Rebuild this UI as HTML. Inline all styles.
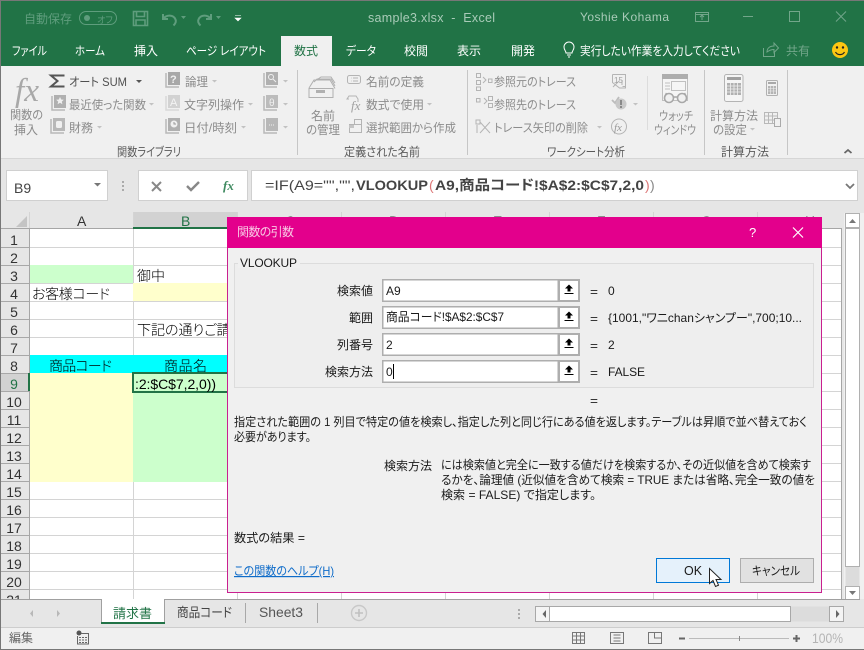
<!DOCTYPE html>
<html lang="ja"><head><meta charset="utf-8"><title>sample3.xlsx - Excel</title>
<style>
html,body{margin:0;padding:0;background:#f0f0f0;overflow:hidden}
svg{display:block;position:absolute;left:0;top:0}
text{font-family:"Liberation Sans","Noto Sans CJK JP",sans-serif;font-size:12px;font-feature-settings:"palt";white-space:pre}
.rb{fill:#8c8c8c}.gp{fill:#5a5a5a}.tb{fill:#fff;font-size:12px}.dl{fill:#1a1a1a}
.sh{fill:#000;font-size:14px;font-weight:300}.rn{fill:#333;font-size:14px;text-anchor:middle}
.ic{fill:none;stroke:#b4b4b4;stroke-width:1}.bk{fill:#b0b0b0}
</style></head><body>
<svg width="864" height="650" viewBox="0 0 864 650" xmlns="http://www.w3.org/2000/svg">
<rect width="864" height="650" fill="#f0f0f0"/>
<!-- title bar -->
<rect x="0" y="0" width="864" height="66" fill="#217346"/>
<rect x="281" y="36" width="51" height="30" fill="#f0f0f0"/>
<g fill="#5f9d7d">
<text x="24" y="23" textLength="48" lengthAdjust="spacingAndGlyphs" fill="#5f9d7d">自動保存</text>
<text x="97" y="23" style="font-size:9px" fill="#5f9d7d">オフ</text>
</g>
<rect x="79.500" y="11.500" width="37" height="13" rx="6.500" fill="none" stroke="#5f9d7d"/>
<circle cx="87" cy="18" r="3" fill="#5f9d7d"/>
<path d="M133.500 11.500h14v14h-14z M136.500 11.500v5h8v-5 M136 25v-5h9v5" fill="none" stroke="#5f9d7d" stroke-width="1.600"/>
<path d="M163 14v5h5 M163.500 18.500c3-4 10-4 12 1 1 2 0 4-2 6" fill="none" stroke="#5f9d7d" stroke-width="2"/>
<path d="M181 16h5l-2.500 3z M216 16h5l-2.500 3z" fill="#5f9d7d"/>
<path d="M211 14v5h-5 M210.500 18.500c-3-4-10-4-12 1-1 2 0 4 2 6" fill="none" stroke="#5f9d7d" stroke-width="2"/>
<path d="M235 15.500h6M235 18h6l-3 3z" fill="#fff" stroke="#fff" stroke-width=".6"/>
<text x="368" y="22" textLength="127" lengthAdjust="spacing" style="font-size:12.500px" fill="#a9cbb8">sample3.xlsx  -  Excel</text>
<text x="580" y="21" textLength="89" lengthAdjust="spacing" fill="#a9cbb8">Yoshie Kohama</text>
<path d="M695.500 12.500h13v9h-13z M702 20v-5M700 17l2-2 2 2M695 14.500h14" fill="none" stroke="#72a68a"/>
<path d="M743 16.500h10" stroke="#72a68a"/>
<rect x="789.500" y="11.500" width="10" height="10" fill="none" stroke="#72a68a"/>
<path d="M836 11.500l10 10m0-10l-10 10" stroke="#72a68a" fill="none"/>
<!-- tabs -->
<text class="tb" x="12" y="55" textLength="35" lengthAdjust="spacingAndGlyphs">ファイル</text>
<text class="tb" x="75" y="55" textLength="30" lengthAdjust="spacingAndGlyphs">ホーム</text>
<text class="tb" x="134" y="55" textLength="24" lengthAdjust="spacingAndGlyphs">挿入</text>
<text class="tb" x="186" y="55" textLength="80" lengthAdjust="spacingAndGlyphs">ページ レイアウト</text>
<text x="294" y="55" textLength="24" lengthAdjust="spacingAndGlyphs" fill="#217346">数式</text>
<text class="tb" x="346" y="55" textLength="30" lengthAdjust="spacingAndGlyphs">データ</text>
<text class="tb" x="404" y="55" textLength="24" lengthAdjust="spacingAndGlyphs">校閲</text>
<text class="tb" x="457" y="55" textLength="24" lengthAdjust="spacingAndGlyphs">表示</text>
<text class="tb" x="511" y="55" textLength="24" lengthAdjust="spacingAndGlyphs">開発</text>
<path d="M566 53c0-2-2-3-2-6a5 5 0 0 1 10 0c0 3-2 4-2 6z M567 55h4M568 57h2" fill="none" stroke="#fff"/>
<text class="tb" x="580" y="55" textLength="160" lengthAdjust="spacingAndGlyphs">実行したい作業を入力してください</text>
<path d="M763.500 48v8.500h11v-4 M767 52c0-4 3-6 7-6v-3l4.500 5-4.500 4.500v-3c-3 0-5 1-7 2.500z" fill="none" stroke="#72a68a"/>
<text x="786" y="55" textLength="24" lengthAdjust="spacingAndGlyphs" fill="#72a68a">共有</text>
<circle cx="840" cy="50" r="8" fill="#fdc712"/>
<circle cx="837" cy="47.500" r="1.200" fill="#222"/><circle cx="843" cy="47.500" r="1.200" fill="#222"/>
<path d="M835.500 52c2 3.500 7 3.500 9 0" fill="none" stroke="#222" stroke-width="1.200"/>

<!-- ribbon -->
<rect x="0" y="66" width="864" height="93" fill="#f0f0f0"/>
<rect x="0" y="158" width="864" height="1" fill="#d6d6d6"/>
<path d="M297.500 70v85M467.500 70v85M704.500 70v85M787.500 70v85" stroke="#c6c6c6"/>
<path d="M647.500 76v54" stroke="#dcdcdc"/>
<text x="15" y="101" style="font-family:'Liberation Serif',serif;font-style:italic;font-size:33px" textLength="24" lengthAdjust="spacingAndGlyphs" fill="#a8a8a8">fx</text>
<text class="rb" x="10" y="119" textLength="33" lengthAdjust="spacingAndGlyphs">関数の</text>
<text class="rb" x="14" y="134" textLength="24" lengthAdjust="spacingAndGlyphs">挿入</text>
<path d="M64.500 75.500H51l6.500 5.500-6.500 5.500h13.500" fill="none" stroke="#555" stroke-width="2"/>
<text x="69" y="86" textLength="58" lengthAdjust="spacingAndGlyphs" fill="#505050">オート SUM</text>
<path d="M136 80h6l-3 3z" fill="#555"/>
<text class="rb" x="69" y="109" textLength="77" lengthAdjust="spacingAndGlyphs">最近使った関数</text>
<text class="rb" x="69" y="132" textLength="24" lengthAdjust="spacingAndGlyphs">財務</text>
<text class="rb" x="185" y="86" textLength="23" lengthAdjust="spacingAndGlyphs">論理</text>
<text class="rb" x="184" y="109" textLength="60" lengthAdjust="spacingAndGlyphs">文字列操作</text>
<text class="rb" x="184" y="132" textLength="53" lengthAdjust="spacingAndGlyphs">日付/時刻</text>
<!-- book icons -->
<g>
<path d="M52 96v14h13" fill="none" stroke="#b8b8b8" stroke-width="1.500"/><rect x="54" y="95" width="12" height="13" fill="#b0b0b0"/><path d="M60 97l1.200 2.500 2.600.3-2 1.800.6 2.600-2.400-1.400-2.400 1.400.6-2.600-2-1.800 2.600-.3z" fill="#f0f0f0"/>
<path d="M51 119v14h13" fill="none" stroke="#b8b8b8" stroke-width="1.500"/><rect x="53" y="118" width="12" height="13" fill="#b8b8b8"/><rect x="56" y="121" width="6" height="7" rx="1.500" fill="#f0f0f0"/>
<path d="M166 73v14h13" fill="none" stroke="#b8b8b8" stroke-width="1.500"/><rect x="168" y="72" width="12" height="13" fill="#a8a8a8"/><text x="170" y="83" style="font-size:11px;font-weight:700" fill="#f0f0f0">?</text>
<path d="M166 96v14h13" fill="none" stroke="#d8d8d8" stroke-width="1.500"/><rect x="168" y="95" width="12" height="13" fill="#d2d2d2"/><text x="170" y="106" style="font-size:11px" fill="#f4f4f4">A</text>
<path d="M166 119v14h13" fill="none" stroke="#b8b8b8" stroke-width="1.500"/><rect x="168" y="118" width="12" height="13" fill="#b0b0b0"/><circle cx="174" cy="124" r="3.500" fill="#f0f0f0"/><path d="M174 122v2h2" stroke="#999" fill="none"/>
<path d="M264 73v14h13" fill="none" stroke="#b8b8b8" stroke-width="1.500"/><rect x="266" y="72" width="12" height="13" fill="#b0b0b0"/><circle cx="271" cy="77" r="2.500" fill="none" stroke="#f0f0f0"/><path d="M273 79l3 3" stroke="#f0f0f0"/>
<path d="M264 96v14h13" fill="none" stroke="#b8b8b8" stroke-width="1.500"/><rect x="266" y="95" width="12" height="13" fill="#bcbcbc"/><text x="269" y="106" style="font-size:10px" fill="#f0f0f0">θ</text>
<path d="M264 119v14h13" fill="none" stroke="#b8b8b8" stroke-width="1.500"/><rect x="266" y="118" width="12" height="13" fill="#b8b8b8"/><path d="M269 125h6" stroke="#f0f0f0" stroke-dasharray="1 1"/>
</g>
<path d="M149 103h5l-2.500 2.500zM97 126h5l-2.500 2.500zM212 80h5l-2.500 2.500zM248 103h5l-2.500 2.500zM241 126h5l-2.500 2.500zM283 80h5l-2.500 2.500zM283 103h5l-2.500 2.500zM283 126h5l-2.500 2.500zM401 80h5l-2.500 2.500zM427 103h5l-2.500 2.500zM597 126h5l-2.500 2.500zM633 103h5l-2.500 2.500z" fill="#c2c2c2"/>
<text class="gp" x="117" y="156" textLength="64" lengthAdjust="spacingAndGlyphs">関数ライブラリ</text>
<!-- names -->
<path d="M309 97.500h24v-9h-24z M309 88l5-8h16l5 8.500 M314 82l3-3h14l4 7 M318 79l3-2h10l4 6" fill="none" stroke="#b0b0b0"/>
<rect x="316" y="90" width="9" height="3" fill="#b0b0b0"/>
<text class="rb" x="311" y="120" textLength="24" lengthAdjust="spacingAndGlyphs">名前</text>
<text class="rb" x="306" y="134" textLength="34" lengthAdjust="spacingAndGlyphs">の管理</text>
<rect x="347.500" y="75.500" width="13" height="8" rx="2" class="ic"/><path d="M351 78h.5M351 81h.5M353 78h5M353 81h5" class="ic"/>
<text class="rb" x="366" y="86" textLength="58" lengthAdjust="spacingAndGlyphs">名前の定義</text>
<path d="M349 99h-2l2-3h7l2 3v3" class="ic"/><text x="351" y="110" style="font-family:'Liberation Serif',serif;font-style:italic;font-size:13px" fill="#a0a0a0">fx</text>
<text class="rb" x="366" y="109" textLength="58" lengthAdjust="spacingAndGlyphs">数式で使用</text>
<rect x="349.500" y="124.500" width="12" height="8" class="ic"/><rect x="354.500" y="119.500" width="7" height="5" class="ic"/><rect x="349" y="125" width="5" height="3" fill="#c4c4c4"/>
<text class="rb" x="366" y="132" textLength="90" lengthAdjust="spacingAndGlyphs">選択範囲から作成</text>
<text class="gp" x="344" y="156" textLength="76" lengthAdjust="spacingAndGlyphs">定義された名前</text>
<!-- audit -->
<path d="M476.500 73.500h4v4h-4zM476.500 80.500h4v4h-4zM476.500 87h4v3.500h-4zM488.500 79h3.500v3.500h-3.500zM483 77l3 3-3 3" class="ic"/>
<path d="M476.500 98.500h3.500v3.500h-3.500zM488.500 96.500h4v4h-4zM488.500 103.500h4v4h-4zM484 98l3 3-3 3" class="ic"/>
<path d="M476 120h4v4h-4zM477 125v8M480 122l10 11M490 122l-10 11" class="ic" stroke-width="1.500"/>
<text class="rb" x="494" y="86" textLength="82" lengthAdjust="spacingAndGlyphs">参照元のトレース</text>
<text class="rb" x="494" y="109" textLength="82" lengthAdjust="spacingAndGlyphs">参照先のトレース</text>
<text class="rb" x="494" y="132" textLength="94" lengthAdjust="spacingAndGlyphs">トレース矢印の削除</text>
<text class="gp" x="547" y="156" textLength="78" lengthAdjust="spacingAndGlyphs">ワークシート分析</text>
<path d="M612.500 74.500h13v12h-3 M612.500 74.500v8l7 5.500h6v-2 M613 87l6-6 M622 80v5" class="ic"/>
<text x="614" y="83" style="font-size:8px" fill="#a0a0a0">15</text>
<path d="M612 100l3 3 4-6" fill="none" stroke="#bcbcbc" stroke-width="1.800"/><circle cx="621" cy="104" r="5.500" fill="#c8c8c8"/><rect x="620" y="100" width="2" height="5" fill="#888"/><rect x="620" y="106" width="2" height="2" fill="#888"/>
<circle cx="619" cy="126.500" r="7.500" class="ic"/><text x="614" y="131" style="font-family:'Liberation Serif',serif;font-style:italic;font-size:11px" fill="#999">fx</text>
<!-- watch -->
<rect x="662.500" y="74.500" width="25" height="26" fill="#f5f5f5" stroke="#c0c0c0"/><rect x="662" y="74" width="26" height="5" fill="#adadad"/>
<rect x="671.500" y="81.500" width="14" height="9" fill="none" stroke="#c0c0c0"/><path d="M665 83h5M665 86h5M665 89h5" stroke="#c0c0c0"/>
<circle cx="669" cy="98" r="4.500" fill="#f0f0f0" stroke="#a8a8a8" stroke-width="1.600"/><circle cx="682" cy="98" r="4.500" fill="#f0f0f0" stroke="#a8a8a8" stroke-width="1.600"/><path d="M673.500 97h4M664.500 97l2-4M686.500 97l-2-4" stroke="#a8a8a8" fill="none" stroke-width="1.400"/>
<text class="rb" x="659" y="120" textLength="34" lengthAdjust="spacingAndGlyphs">ウォッチ</text>
<text class="rb" x="654" y="134" textLength="42" lengthAdjust="spacingAndGlyphs">ウィンドウ</text>
<!-- calc -->
<rect x="724.500" y="74.500" width="18.500" height="27" rx="2" fill="#f5f5f5" stroke="#b4b4b4"/><rect x="727" y="77" width="14" height="3" fill="#a0a0a0"/>
<path d="M727 83h14v12h-14z" fill="#b0b0b0"/><path d="M730.500 83v12M734 83v12M737.500 83v12M727 86h14M727 89h14M727 92h14" stroke="#f0f0f0" stroke-width=".8"/>
<rect x="766.500" y="80.500" width="11" height="15" rx="1" fill="none" stroke="#b0b0b0"/><rect x="768" y="82" width="8" height="2" fill="#a8a8a8"/><path d="M768 86h8v8h-8z" fill="#b4b4b4"/><path d="M770.500 86v8M773.500 86v8M768 88.500h8M768 91h8" stroke="#f0f0f0" stroke-width=".6"/>
<rect x="764.500" y="112.500" width="13" height="11" fill="none" stroke="#b8b8b8"/><path d="M768.500 112v12M772.500 112v12M764 116h14M764 120h14" stroke="#b8b8b8"/><rect x="774.500" y="118.500" width="6" height="8" fill="#f0f0f0" stroke="#aaa"/>
<text class="rb" x="710" y="120" textLength="48" lengthAdjust="spacingAndGlyphs">計算方法</text>
<text class="rb" x="713" y="134" textLength="34" lengthAdjust="spacingAndGlyphs">の設定</text>
<path d="M750 128h5l-2.500 2.500z" fill="#c2c2c2"/>
<text class="gp" x="721" y="156" textLength="48" lengthAdjust="spacingAndGlyphs">計算方法</text>
<path d="M844.500 153l3.500-3 3.500 3" fill="none" stroke="#666" stroke-width="1.800"/>

<!-- formula bar -->
<rect x="0" y="159" width="864" height="54" fill="#e6e6e6"/>
<rect x="6.500" y="170.500" width="101" height="30" fill="#fff" stroke="#d0d0d0"/>
<text x="14" y="193" style="font-size:14px" fill="#444">B9</text>
<path d="M94 183h7l-3.500 3.500z" fill="#777"/>
<path d="M123 181v2M123 185v2M123 189v2" stroke="#aaa" stroke-width="2"/>
<rect x="138.500" y="170.500" width="109" height="30" fill="#fff" stroke="#d0d0d0"/>
<rect x="251.500" y="170.500" width="606" height="30" fill="#fff" stroke="#d0d0d0"/>
<path d="M152 182l9 9m0-9l-9 9" stroke="#888" stroke-width="2" fill="none"/>
<path d="M187 186l4 4 8-8" stroke="#888" stroke-width="2.400" fill="none"/>
<text x="223" y="190" style="font-family:'Liberation Serif',serif;font-style:italic;font-weight:700;font-size:13px" fill="#3f8a60">fx</text>
<text x="265" y="190" textLength="90" lengthAdjust="spacingAndGlyphs" style="font-size:14px" fill="#444">=IF(A9="","",</text>
<text x="356" y="190" textLength="72" lengthAdjust="spacingAndGlyphs" style="font-size:14px;font-weight:700" fill="#444">VLOOKUP</text>
<text x="429" y="190" style="font-size:14px" fill="#d77">(</text>
<text x="435" y="190" textLength="209" lengthAdjust="spacingAndGlyphs" style="font-size:14px;font-weight:700" fill="#444">A9,商品コード!$A$2:$C$7,2,0</text>
<text x="645" y="190" style="font-size:14px" fill="#d77">)</text><text x="650" y="190" style="font-size:14px" fill="#888">)</text>
<path d="M846 184l4 4 4-4" fill="none" stroke="#777" stroke-width="1.800"/>

<!-- grid -->
<rect x="1" y="213" width="843" height="386" fill="#e6e6e6"/>
<rect x="30" y="229" width="811" height="370" fill="#fff"/>
<rect x="133" y="212" width="104" height="16" fill="#d2d2d2"/>
<rect x="0" y="373" width="29" height="18" fill="#d2d2d2"/>
<path d="M16 227h11v-11z" fill="#c4c4c4"/>
<g stroke="#d4d4d4" fill="none">
<path d="M1 247.500H841M1 265.500H841M1 283.500H841M1 301.500H841M1 319.500H841M1 337.500H841M1 355.500H841M1 373.500H841M1 391.500H841M1 409.500H841M1 427.500H841M1 445.500H841M1 463.500H841M1 481.500H841M1 499.500H841M1 517.500H841M1 535.500H841M1 553.500H841M1 571.500H841M1 589.500H841"/>
<path d="M29.500 212V599M133.500 212V599M237.500 212V599M341.500 212V599M445.500 212V599M549.500 212V599M653.500 212V599M757.500 212V599"/>
</g>
<path d="M1 247.500H29M1 265.500H29M1 283.500H29M1 301.500H29M1 319.500H29M1 337.500H29M1 355.500H29M1 373.500H29M1 391.500H29M1 409.500H29M1 427.500H29M1 445.500H29M1 463.500H29M1 481.500H29M1 499.500H29M1 517.500H29M1 535.500H29M1 553.500H29M1 571.500H29M1 589.500H29" stroke="#a8a8a8"/>
<path d="M0 228.500H841M841.500 228V599M29.500 228V599" stroke="#a6a6a6"/>
<rect x="30" y="265" width="103" height="18" fill="#ccffcc"/>
<rect x="133" y="283" width="104" height="18" fill="#ffffcc"/>
<rect x="30" y="355" width="207" height="18" fill="#00ffff"/>
<rect x="30" y="373" width="103" height="109" fill="#ffffcc"/>
<rect x="133" y="373" width="104" height="109" fill="#ccffcc"/>
<rect x="133" y="227" width="104" height="2" fill="#217346"/>
<rect x="28" y="373" width="2" height="18" fill="#217346"/>
<rect x="133" y="373" width="104" height="19" fill="none" stroke="#217346" stroke-width="2"/>
<text x="77" y="226" style="font-size:14px" fill="#333">A</text>
<text x="181" y="226" style="font-size:14px" fill="#217346">B</text>
<text x="285" y="226" style="font-size:14px" fill="#333">C</text><text x="389" y="226" style="font-size:14px" fill="#333">D</text><text x="493" y="226" style="font-size:14px" fill="#333">E</text><text x="597" y="226" style="font-size:14px" fill="#333">F</text><text x="701" y="226" style="font-size:14px" fill="#333">G</text><text x="805" y="226" style="font-size:14px" fill="#333">H</text>
<g class="num">
<text class="rn" x="14" y="245">1</text><text class="rn" x="14" y="263">2</text><text class="rn" x="14" y="281">3</text><text class="rn" x="14" y="299">4</text><text class="rn" x="14" y="317">5</text><text class="rn" x="14" y="335">6</text><text class="rn" x="14" y="353">7</text><text class="rn" x="14" y="371">8</text><text class="rn" x="14" y="389" style="fill:#217346">9</text><text class="rn" x="14" y="407">10</text><text class="rn" x="14" y="425">11</text><text class="rn" x="14" y="443">12</text><text class="rn" x="14" y="461">13</text><text class="rn" x="14" y="479">14</text><text class="rn" x="14" y="497">15</text><text class="rn" x="14" y="515">16</text><text class="rn" x="14" y="533">17</text><text class="rn" x="14" y="551">18</text><text class="rn" x="14" y="569">19</text><text class="rn" x="14" y="587">20</text><text class="rn" x="14" y="605">21</text>
</g>
<text class="sh" x="137" y="281" textLength="28" lengthAdjust="spacing">御中</text>
<text class="sh" x="32" y="299" textLength="78" lengthAdjust="spacing">お客様コード</text>
<text class="sh" x="137" y="335">下記の通りご請</text>
<text class="sh" x="49" y="371" textLength="63" lengthAdjust="spacing">商品コード</text>
<text class="sh" x="164" y="371" textLength="43" lengthAdjust="spacing">商品名</text>
<text x="135" y="389" textLength="81" lengthAdjust="spacing" style="font-size:14px" fill="#000">:2:$C$7,2,0))</text>

<!-- scrollbar v -->
<rect x="845.500" y="213.500" width="14" height="14" fill="#fff" stroke="#b0b0b0"/><path d="M849 223l3.500-4 3.500 4z" fill="#777"/>
<rect x="845.500" y="228" width="14" height="371" fill="#dcdcdc"/>
<rect x="845.500" y="228.500" width="14" height="338" fill="#fff" stroke="#b0b0b0"/>
<rect x="845.500" y="586.500" width="14" height="13" fill="#fff" stroke="#b0b0b0"/><path d="M849 591l3.500 4 3.500-4z" fill="#777"/>

<!-- sheet tabs -->
<rect x="1" y="599" width="863" height="28" fill="#e6e6e6"/>
<path d="M0 599.500H860" stroke="#a0a0a0"/>
<path d="M0 627.500H864" stroke="#cdcdcd"/>
<rect x="101" y="599" width="64" height="23" fill="#fff"/>
<path d="M101.500 599v25M164.500 599v23" stroke="#a0a0a0"/>
<rect x="101" y="622" width="64" height="2" fill="#217346"/>
<path d="M33 610v7l-3-3.500zM57 610v7l3-3.500z" fill="#b8b8b8"/>
<text x="113" y="618" textLength="39" lengthAdjust="spacingAndGlyphs" style="font-size:13px" fill="#217346">請求書</text>
<text x="177" y="617" textLength="55" lengthAdjust="spacingAndGlyphs" style="font-size:13px" fill="#444">商品コード</text>
<path d="M245.500 603v20M317.500 603v20" stroke="#a8a8a8"/>
<text x="259" y="617" textLength="44" lengthAdjust="spacingAndGlyphs" style="font-size:14px" fill="#555">Sheet3</text>
<circle cx="359" cy="613" r="7.500" fill="none" stroke="#c8c8c8" stroke-width="1.400"/><path d="M355 613h8M359 609v8" stroke="#c0c0c0" stroke-width="1.600"/>
<path d="M519 609v2M519 613v2M519 617v2" stroke="#aaa" stroke-width="2"/>
<rect x="535.500" y="606.500" width="14" height="15" fill="#f4f4f4" stroke="#a8a8a8"/><path d="M546 610v8l-3.500-4z" fill="#666"/>
<rect x="549" y="606.500" width="280" height="15" fill="#dcdcdc"/>
<rect x="549.500" y="606.500" width="241" height="15" fill="#fff" stroke="#a8a8a8"/>
<rect x="829.500" y="606.500" width="14" height="15" fill="#f4f4f4" stroke="#a8a8a8"/><path d="M836 610v8l3.500-4z" fill="#666"/>

<!-- status -->
<text x="9" y="642" textLength="24" lengthAdjust="spacingAndGlyphs" fill="#666">編集</text>
<circle cx="79" cy="633" r="2.500" fill="#555"/><path d="M81 633.500h7.500v10.500h-11v-8" fill="none" stroke="#666"/><path d="M79 637.500h8M79 640h8M79 642.500h8" stroke="#666" stroke-dasharray="2 1"/>
<path d="M572.500 632.500h12v11h-12zM576.500 632v12M580.500 632v12M572 636h13M572 640h13" fill="none" stroke="#777"/>
<path d="M610.500 632.500h13v11h-13zM613.500 635h7M613.500 638h7M613.500 641h7" fill="none" stroke="#777"/>
<path d="M648.500 632.500h13v11h-13zM654.500 632v6h7" fill="none" stroke="#777"/>
<path d="M679 638.500h6" stroke="#666" stroke-width="2"/><path d="M689 638.500h100" stroke="#bbb"/><path d="M739.500 636v5" stroke="#888"/>
<path d="M793 638.500h7M796.500 635v7" stroke="#666" stroke-width="2"/>
<text x="812" y="643" textLength="31" lengthAdjust="spacingAndGlyphs" style="font-size:14px" fill="#b4b4b4">100%</text>

<!-- dialog -->
<rect x="227.500" y="217.500" width="594" height="375" fill="#f0f0f0" stroke="#c9208f"/>
<rect x="227" y="217" width="595" height="31" fill="#e3008c"/>
<text x="237" y="236" textLength="57" lengthAdjust="spacing" fill="#f8c8e4">関数の引数</text>
<text x="749" y="237" style="font-size:13px" fill="#fff">?</text>
<path d="M793 227.500l10 10m0-10l-10 10" stroke="#fff" stroke-width="1.200" fill="none"/>
<rect x="234.500" y="263.500" width="579" height="124" fill="#eeeeee" stroke="#dcdcdc"/>
<rect x="238" y="258" width="62" height="10" fill="#f0f0f0"/>
<text class="dl" x="240" y="267" textLength="57" lengthAdjust="spacing">VLOOKUP</text>
<text class="dl" x="337" y="295" textLength="36" lengthAdjust="spacingAndGlyphs">検索値</text>
<text class="dl" x="349" y="322" textLength="24" lengthAdjust="spacingAndGlyphs">範囲</text>
<text class="dl" x="337" y="349" textLength="36" lengthAdjust="spacingAndGlyphs">列番号</text>
<text class="dl" x="325" y="376" textLength="48" lengthAdjust="spacingAndGlyphs">検索方法</text>
<g fill="#fff" stroke="#aeaeae" stroke-width="1.500">
<rect x="382.750" y="279.750" width="175.500" height="21.500"/>
<rect x="382.750" y="306.750" width="175.500" height="21.500"/>
<rect x="382.750" y="333.750" width="175.500" height="21.500"/>
<rect x="382.750" y="360.750" width="175.500" height="21.500"/>
</g>
<g fill="#fff" stroke="#aeaeae" stroke-width="2">
<rect x="559" y="280" width="20" height="21"/><rect x="559" y="307" width="20" height="21"/><rect x="559" y="334" width="20" height="21"/><rect x="559" y="361" width="20" height="21"/>
</g>
<g fill="#000">
<path d="M569 284.500l4 4h-2.500v3h-3v-3H565zM564.500 293h9v1h-9z"/>
<path d="M569 311.500l4 4h-2.500v3h-3v-3H565zM564.500 320h9v1h-9z"/>
<path d="M569 338.500l4 4h-2.500v3h-3v-3H565zM564.500 347h9v1h-9z"/>
<path d="M569 365.500l4 4h-2.500v3h-3v-3H565zM564.500 374h9v1h-9z"/>
</g>
<text class="dl" x="386" y="295">A9</text>
<text class="dl" x="386" y="321" textLength="118" lengthAdjust="spacingAndGlyphs">商品コード!$A$2:$C$7</text>
<text class="dl" x="386" y="349">2</text>
<text class="dl" x="386" y="376">0</text>
<path d="M393.500 364v15" stroke="#000"/>
<text class="dl" x="590" y="296" textLength="8" lengthAdjust="spacingAndGlyphs">=</text><text class="dl" x="590" y="323" textLength="8" lengthAdjust="spacingAndGlyphs">=</text><text class="dl" x="590" y="350" textLength="8" lengthAdjust="spacingAndGlyphs">=</text><text class="dl" x="590" y="377" textLength="8" lengthAdjust="spacingAndGlyphs">=</text>
<text class="dl" x="590" y="405" textLength="8" lengthAdjust="spacingAndGlyphs">=</text>
<text class="dl" x="608" y="295">0</text>
<text class="dl" x="608" y="322" textLength="194" lengthAdjust="spacingAndGlyphs">{1001,"ワニchanシャンプー",700;10...</text>
<text class="dl" x="608" y="349">2</text>
<text class="dl" x="608" y="376" textLength="37" lengthAdjust="spacing">FALSE</text>
<text class="dl" x="234" y="426" textLength="573" lengthAdjust="spacingAndGlyphs">指定された範囲の 1 列目で特定の値を検索し、指定した列と同じ行にある値を返します。テーブルは昇順で並べ替えておく</text>
<text class="dl" x="234" y="441" textLength="77" lengthAdjust="spacingAndGlyphs">必要があります。</text>
<text class="dl" x="384" y="470" textLength="48" lengthAdjust="spacingAndGlyphs">検索方法</text>
<text class="dl" x="441" y="469" textLength="370" lengthAdjust="spacingAndGlyphs">には検索値と完全に一致する値だけを検索するか、その近似値を含めて検索す</text>
<text class="dl" x="441" y="484" textLength="374" lengthAdjust="spacingAndGlyphs">るかを、論理値 (近似値を含めて検索 = TRUE または省略、完全一致の値を</text>
<text class="dl" x="441" y="499" textLength="155" lengthAdjust="spacingAndGlyphs">検索 = FALSE) で指定します。</text>
<text class="dl" x="234" y="542" textLength="71" lengthAdjust="spacingAndGlyphs">数式の結果 =</text>
<text x="234" y="575" textLength="100" lengthAdjust="spacingAndGlyphs" fill="#0f6cc9" text-decoration="underline">この関数のヘルプ(H)</text>
<rect x="656.500" y="558.500" width="73" height="24" fill="#e5f1fb" stroke="#0078d7"/>
<text class="dl" x="684" y="575" style="font-size:12.500px">OK</text>
<rect x="740.500" y="558.500" width="73" height="24" fill="#e1e1e1" stroke="#adadad"/>
<text class="dl" x="752" y="575" textLength="48" lengthAdjust="spacingAndGlyphs">キャンセル</text>
<path d="M709.500 568.500v15l3.500-3 2.500 6 3-1.300-2.500-5.700h5z" fill="#fff" stroke="#222"/>

<!-- window edge -->
<rect x="0" y="0" width="864" height="1" fill="#777"/>
<rect x="0" y="0" width="1" height="650" fill="#777"/>
<rect x="0" y="649" width="864" height="1" fill="#777"/>
</svg>
</body></html>
